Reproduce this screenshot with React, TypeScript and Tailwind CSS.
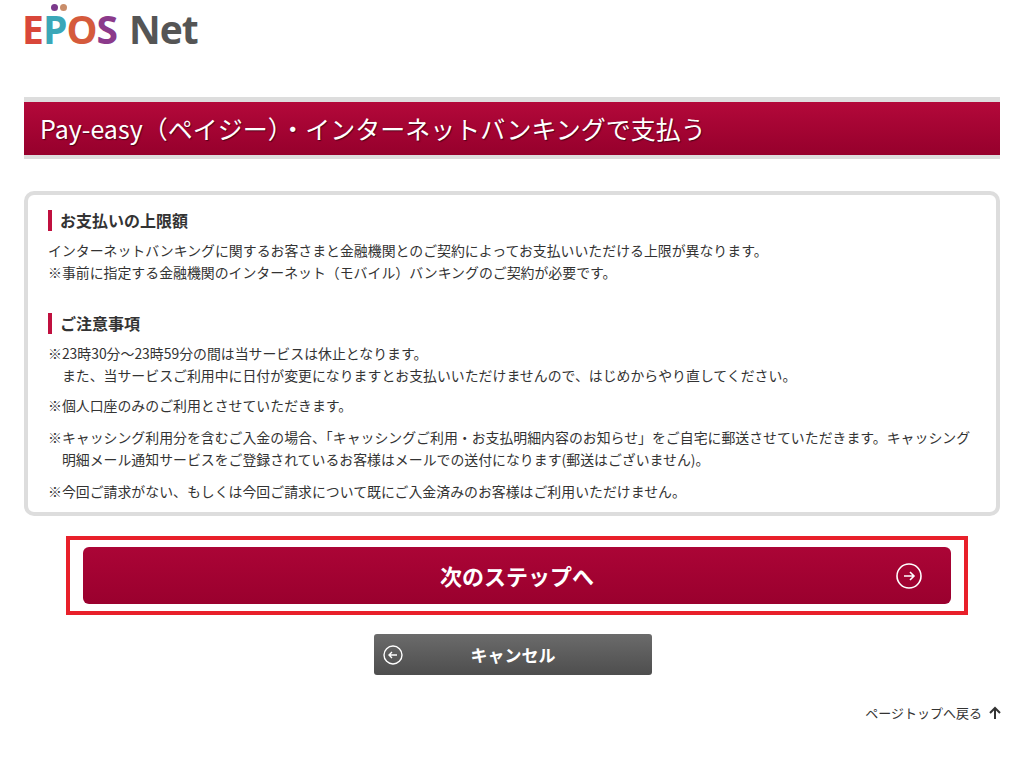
export default function App() {
  const jp = { fontFamily: '"Noto Sans CJK JP", "Noto Sans", sans-serif' };
  return (
    <div className="w-[1024px] h-[781px] bg-white text-[#333]" style={jp}>
      <div className="pl-[22px] pt-[9px] h-[97px]">
        <div className="flex items-end text-[39px] font-bold leading-none tracking-tight relative" style={{ fontFamily: '"Open Sans", sans-serif' }}>
          <span className="text-[#d9473a]">E</span>
          <span className="text-[#3aa7b8] relative">P<span className="absolute left-[8px] -top-[5px] w-[7px] h-[7px] rounded-full bg-[#7b3a8c]"></span><span className="absolute left-[17px] -top-[5px] w-[7px] h-[7px] rounded-full bg-[#c98d6a]"></span></span>
          <span className="text-[#d55a3c]">O</span>
          <span className="text-[#8b3a8b]">S</span>
          <span className="text-[#555] ml-[12px]">Net</span>
        </div>
      </div>
      <div className="mx-[24px] border-t-[5px] border-[#ddd] border-b-[4px]">
        <div className="h-[53px] bg-gradient-to-b from-[#b3093a] to-[#96002c] flex items-center pl-[16px] text-white text-[25px]" style={{ textShadow: '1px 1px 1px rgba(0,0,0,0.5)' }}>
          Pay-easy（ペイジー）・インターネットバンキングで支払う
        </div>
      </div>
      <div className="mx-[24px] mt-[32px] border-[4px] border-[#ddd] rounded-[10px] px-[20px] pt-[15px] pb-[10px] text-[13.9px] leading-[22px]">
        <div className="border-l-[4px] border-[#c0103f] pl-[8px] font-bold text-[16px] leading-[21px]">お支払いの上限額</div>
        <p className="mt-[8px]">インターネットバンキングに関するお客さまと金融機関とのご契約によってお支払いいただける上限が異なります。<br />※事前に指定する金融機関のインターネット（モバイル）バンキングのご契約が必要です。</p>
        <div className="mt-[30px] border-l-[4px] border-[#c0103f] pl-[8px] font-bold text-[16px] leading-[21px]">ご注意事項</div>
        <p className="mt-[8px]">※23時30分～23時59分の間は当サービスは休止となります。<br />　また、当サービスご利用中に日付が変更になりますとお支払いいただけませんので、はじめからやり直してください。</p>
        <p className="mt-[8px]">※個人口座のみのご利用とさせていただきます。</p>
        <p className="mt-[10px]">※キャッシング利用分を含むご入金の場合、「キャッシングご利用・お支払明細内容のお知らせ」をご自宅に郵送させていただきます。キャッシング<br />　明細メール通知サービスをご登録されているお客様はメールでの送付になります(郵送はございません)。</p>
        <p className="mt-[10px]">※今回ご請求がない、もしくは今回ご請求について既にご入金済みのお客様はご利用いただけません。</p>
      </div>
      <div className="mx-[66px] mt-[20px] border-[4px] border-[#e8202a] w-[902px] h-[79px] px-[13px] pt-[7px]">
        <div className="h-[57px] rounded-[6px] bg-gradient-to-b from-[#ab0536] to-[#9a002e] flex items-center justify-center relative text-white text-[22px] font-bold">
          次のステップへ
          <svg className="absolute right-[28px]" width="28" height="28" viewBox="0 0 28 28" fill="none" stroke="white" strokeWidth="1.6"><circle cx="14" cy="14" r="12" /><path d="M9 14h10M15 10l4 4-4 4" /></svg>
        </div>
      </div>
      <div className="ml-[374px] mt-[19px] w-[278px] h-[41px] rounded-[3px] bg-gradient-to-b from-[#6b6b6b] to-[#4e4e4e] flex items-center justify-center relative text-white text-[17px] font-bold">
        <svg className="absolute left-[8px]" width="22" height="22" viewBox="0 0 22 22" fill="none" stroke="white" strokeWidth="1.4"><circle cx="11" cy="11" r="9" /><path d="M15 11H7M10 8l-3 3 3 3" /></svg>
        キャンセル
      </div>
      <div className="flex justify-end items-center mr-[22px] mt-[28px] text-[13px] text-[#333] gap-[6px]">
        ページトップへ戻る
        <svg width="14" height="14" viewBox="0 0 14 14" fill="none" stroke="#333" strokeWidth="2"><path d="M7 13V2M2 7l5-5 5 5" /></svg>
      </div>
    </div>
  );
}
